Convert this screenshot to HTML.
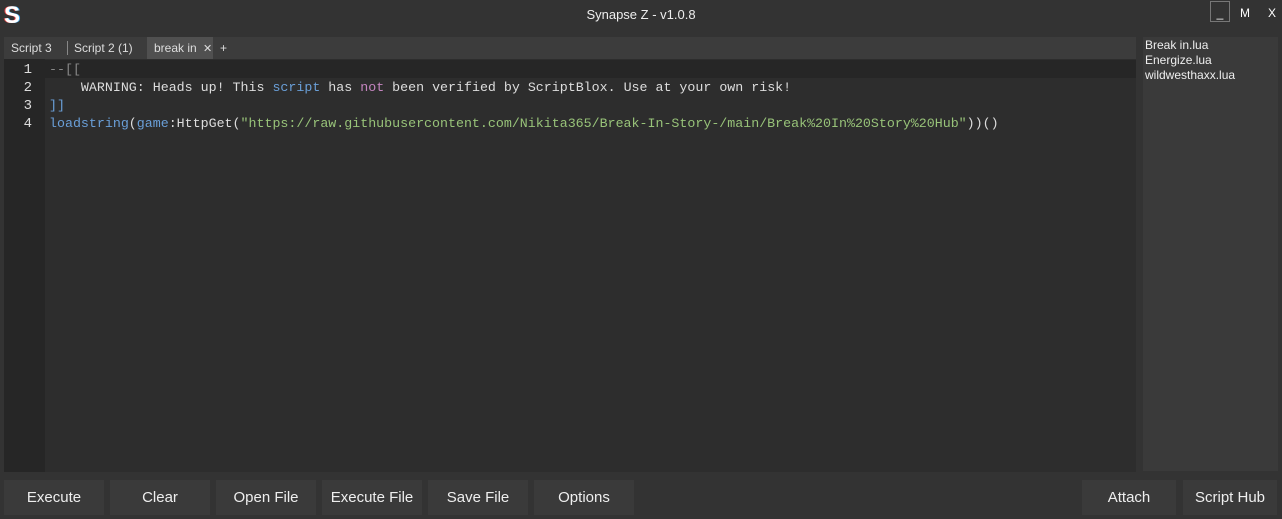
<!DOCTYPE html>
<html><head><style>
*{margin:0;padding:0;box-sizing:border-box}
body{width:1282px;height:519px;background:#333;position:relative;overflow:hidden;font-family:"Liberation Sans",sans-serif;color:#fff}
.abs{position:absolute}
.title{left:0;top:7px;width:1282px;text-align:center;font-size:13px;color:#eee}
.tabs{left:4px;top:37px;width:1132px;height:22px;background:#3c3c3c}
.tab{position:absolute;top:0;height:22px;font-size:12px;line-height:22px;color:#ddd}
.editor{left:4px;top:59px;width:1132px;height:413px;background:#2d2d2d}
.gutter{left:4px;top:59px;width:41px;height:413px;background:#262626}
.code{font-family:"Liberation Mono",monospace;font-size:13.3px;line-height:18px;white-space:pre;color:#ddd}
.ln{font-family:"Liberation Mono",monospace;font-size:14px;line-height:18px;text-align:right;width:28px;color:#ddd}
.side{left:1143px;top:37px;width:135px;height:434px;background:#3a3a3a;font-size:12px;line-height:15px;padding:1px 2px;color:#eee}
.btn{position:absolute;top:480px;height:35px;background:#3a3a3a;font-size:15px;line-height:35px;text-align:center;color:#eee}
</style></head><body>
<div class="abs" style="left:4px;top:4px;width:22px;height:24px;font:bold 24px/24px 'Liberation Sans',sans-serif;color:#fff;text-shadow:-1px 0 #e44,1px 0 #4ae">S</div>
<div class="abs title">Synapse Z - v1.0.8</div>
<div class="abs" style="left:1210px;top:1px;width:20px;height:21px;border:1px solid #777;font-size:12px;text-align:center;line-height:22px">_</div>
<div class="abs" style="left:1240px;top:6px;font-size:12px">M</div>
<div class="abs" style="left:1268px;top:6px;font-size:12px">X</div>
<div class="abs tabs">
<div class="tab" style="left:7px">Script 3</div>
<div class="tab" style="left:63px;top:4px;height:14px;width:1px;background:#888"></div>
<div class="tab" style="left:70px">Script 2 (1)</div>
<div class="tab" style="left:143px;width:66px;background:#505050;padding-left:7px">break in <span style="font-size:11px;margin-left:3px">✕</span></div>
<div class="tab" style="left:216px">+</div>
</div>
<div class="abs editor"></div>
<div class="abs" style="left:45px;top:60px;width:1091px;height:18px;background:#262626"></div>
<div class="abs gutter"></div>
<div class="abs ln" style="left:4px;top:61px">1<br>2<br>3<br>4</div>
<div class="abs code" style="left:49px;top:61px"><span style="color:#888">--[[</span>
<span style="color:#ddd">    WARNING: Heads up! This <span style="color:#6a9fd8">script</span> has <span style="color:#c585c0">not</span> been verified by ScriptBlox. Use at your own risk!</span>
<span style="color:#6a9fd8">]]</span>
<span style="color:#6a9fd8">loadstring</span>(<span style="color:#6a9fd8">game</span>:HttpGet(<span style="color:#98c379">"https://raw.githubusercontent.com/Nikita365/Break-In-Story-/main/Break%20In%20Story%20Hub"</span>))()</div>
<div class="abs side">Break in.lua<br>Energize.lua<br>wildwesthaxx.lua</div>
<div class="btn" style="left:4px;width:100px">Execute</div>
<div class="btn" style="left:110px;width:100px">Clear</div>
<div class="btn" style="left:216px;width:100px">Open File</div>
<div class="btn" style="left:322px;width:100px">Execute File</div>
<div class="btn" style="left:428px;width:100px">Save File</div>
<div class="btn" style="left:534px;width:100px">Options</div>
<div class="btn" style="left:1082px;width:94px">Attach</div>
<div class="btn" style="left:1183px;width:94px">Script Hub</div>
</body></html>
